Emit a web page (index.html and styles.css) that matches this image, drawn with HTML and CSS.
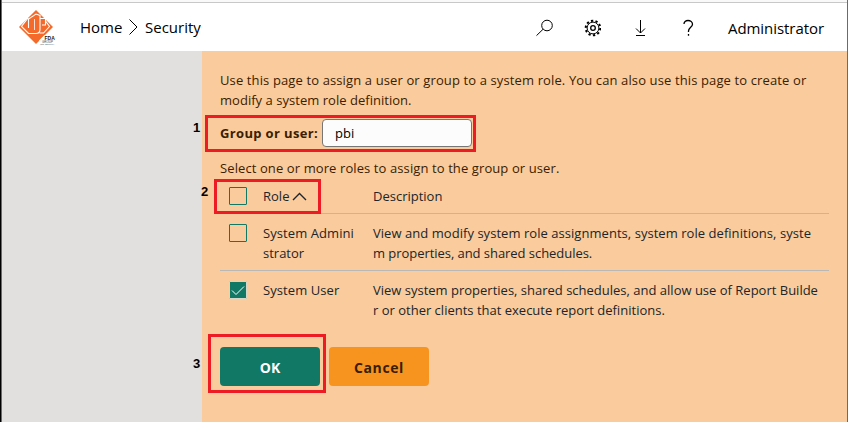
FILE: index.html
```html
<!DOCTYPE html>
<html lang="en">
<head>
<meta charset="utf-8">
<title>Security</title>
<link rel="stylesheet" href="styles.css">
</head>
<body>
<div class="window">
  <header class="topbar">
    <svg class="logo" width="36" height="36" viewBox="0 0 36 36">
      <path d="M17 0 34 17 17 34 0 17Z" fill="#f36a2b"/>
      <path d="M9 8 2.500 16.500 9.500 23.500H17q4 0 4-4V5.500L17 4 9.500 9v9" class="logo-line"/>
      <path d="M15.500 9v11" class="logo-line faint"/>
      <path d="M21 8.500h5.500V15H23M26.500 11l4 5.500-6 6.500h-4" class="logo-line"/>
      <path d="M25.500 25h10.500v10H20v-4.500Z" fill="#fff"/>
      <text x="25.500" y="29.500" class="logo-a">FDA</text>
      <text x="23" y="32.500" class="logo-b">GROUP</text>
      <text x="21" y="35" class="logo-c">INT. EQUITY</text>
    </svg>
    <nav class="crumbs"><span class="home">Home</span>
      <svg width="11" height="18" viewBox="0 0 11 18"><path d="M1.5 1.5 9 9 1.5 16.5" class="ink"/></svg>
      <span class="security">Security</span></nav>
    <div class="tools">
      <svg width="18" height="18" viewBox="0 0 18 18"><circle cx="12" cy="6.500" r="5.300" class="ink"/><path d="M8 10.300 1.500 16.600" class="ink"/></svg>
      <svg width="18" height="18" viewBox="0 0 18 18"><circle cx="10" cy="9" r="7.300" class="ink teeth"/><circle cx="10" cy="9" r="5.900" class="ink"/><circle cx="10" cy="9" r="2.300" class="ink thick"/></svg>
      <svg width="18" height="18" viewBox="0 0 18 18"><path d="M9.500 1v13M5 9.500l4.500 4.500L14 9.500M5 16.500h9" class="ink"/></svg>
      <svg width="18" height="18" viewBox="0 0 18 18"><path d="M5 5C5 2.700 6.600 1.500 9 1.500S13.500 3 13.500 5.200C13.500 8 9.500 8.500 9.500 12v1M9.500 15v1.700" class="ink thick"/></svg>
    </div>
    <span class="admin">Administrator</span>
  </header>
  <div class="body">
    <aside class="side"></aside>
    <main class="main">
      <p class="intro"><span class="line i1">Use this page to assign a user or group to a system role. You can also use this page to create or</span><span class="line i2">modify a system role definition.</span></p>
      <div class="field"><label class="label" for="user">Group or user:</label><input id="user" class="input" type="text" value="pbi"></div>
      <p class="select"><span class="line i3">Select one or more roles to assign to the group or user.</span></p>
      <div class="roles">
        <div class="row head"><i class="check"></i><div class="name"><span class="role">Role</span><svg width="15" height="9" viewBox="0 0 15 9"><path d="M1 8 7.500 1.500 14 8" class="chev"/></svg></div><div><span class="line">Description</span></div></div>
        <div class="row"><i class="check"></i><div class="name"><span class="line n1">System Admini</span><span class="line">strator</span></div><div><span class="line d1">View and modify system role assignments, system role definitions, syste</span><span class="line d2">m properties, and shared schedules.</span></div></div>
        <div class="row last"><i class="check on"><svg width="16" height="16" viewBox="0 0 16 16"><path d="M2 8.500 6 12.500 14 4.500" class="tick"/></svg></i><div class="name"><span class="line n1">System User</span></div><div><span class="line">View system properties, shared schedules, and allow use of Report Builde</span><span class="line">r or other clients that execute report definitions.</span></div></div>
      </div>
      <div class="actions"><button class="btn ok">OK</button><button class="btn cancel">Cancel</button></div>
    </main>
  </div>
  <div class="mark m1"></div><div class="mark m2"></div><div class="mark m3"></div>
  <b class="num k1">1</b><b class="num k2">2</b><b class="num k3">3</b>
</div>
</body>
</html>
```
FILE: styles.css
```css
* { box-sizing: border-box; }
body { margin: 0; font: 13px/20px "Open Sans", "Noto Sans", sans-serif; color: #3b1d00; }
p { margin: 0; }
.window { position: relative; display: flex; flex-direction: column; width: 848px; height: 422px; overflow: hidden; border-left: 1px solid #000; border-right: 1px solid #2b7cb8; background: #f9f9f9; padding-top: 2px; box-shadow: inset 1px 0 #2b7cb8; }
.topbar { display: flex; align-items: center; height: 49px; flex: none; margin-left: 1px; border-top: 1px solid #c8c8c8; background: #fff; color: #000; padding-left: 17px; font-size: 15px; }
.logo { margin-top: 1px; }
.logo-line { fill: none; stroke: #fff; stroke-width: 1.100; }
.faint { stroke-width: .8; }
.logo-a { font: bold 5px "Liberation Sans", sans-serif; fill: #222; }
.logo-b { font: 3px "Liberation Sans", sans-serif; fill: #444; }
.logo-c { font: 2.500px "Liberation Sans", sans-serif; fill: #555; }
.crumbs { display: flex; align-items: center; width: 200px; margin-left: 24px; padding-left: 1px; }
.crumbs svg { margin: 0 6px 0 5px; }
.home { width: 43px; white-space: nowrap; }
.tools { display: flex; gap: 30px; margin-left: 256px; margin-top: 2px; }
.admin { margin-left: 31px; margin-top: 2px; white-space: nowrap; letter-spacing: -.06px; }
.ink { fill: none; stroke: #000; stroke-width: 1; }
.thick { stroke-width: 1.300; }
.teeth { stroke-width: 2; stroke-dasharray: 2.300 2.287; }
.body { display: flex; flex: 1; margin-left: 1px; }
.side { width: 200px; background: #e1e0df; }
.main { flex: 1; background: #facb9c; padding: 19px 18px 0; }
.line { display: block; width: max-content; white-space: nowrap; }
.i1 { letter-spacing: .122px; }
.i2 { letter-spacing: .03px; }
.i3 { letter-spacing: .1px; }
.n1 { letter-spacing: .08px; }
.d1 { letter-spacing: .045px; }
.d2 { letter-spacing: -.05px; }
.field { display: flex; align-items: center; height: 28px; margin-top: 9px; }
.label { width: 102px; font-weight: bold; white-space: nowrap; letter-spacing: .35px; }
.input { width: 150px; height: 28px; padding: 0 12px; border: 1px solid #767676; border-radius: 4px; background: #fcfcfc; color: #000; font: inherit; }
.select { margin-top: 11px; }
.roles { width: 609px; color: #212529; }
.row { display: grid; grid-template-columns: 43px 110px 1fr; padding: 9px 0 7px; border-bottom: 1px solid #b8b8b8; height: 57px; }
.head { height: 36px; padding-top: 8px; }
.last { border: 0; }
.name { white-space: nowrap; }
.head .name svg { margin-left: 3px; }
.check { width: 18px; height: 18px; margin: 1px 0 0 9px; border: 1px solid #117865; border-radius: 1px; }
.on { background: #117865; border-color: #d5d8c8; }
.on svg { display: block; }
.tick { fill: none; stroke: #fff; }
.chev { fill: none; stroke: #212529; stroke-width: 1.400; }
.actions { display: flex; gap: 9px; margin-top: 19px; }
.btn { width: 100px; height: 39px; border: 0; border-radius: 4px; font: bold 14px "Open Sans", "Noto Sans", sans-serif; padding: 2px 0 0; }
.ok { background: #117865; color: #fff; }
.cancel { background: #f79420; color: #3b1d00; letter-spacing: .6px; }
.mark { position: absolute; border: 3px solid #ed1c24; }
.m1 { left: 204px; top: 115px; width: 271px; height: 37px; }
.m2 { left: 213px; top: 179px; width: 107px; height: 35px; }
.m3 { left: 207px; top: 334px; width: 118px; height: 59px; }
.num { position: absolute; color: #000; font: bold 13px/14px "Liberation Sans", sans-serif; }
.k1 { left: 192px; top: 121px; }
.k2 { left: 200px; top: 185px; }
.k3 { left: 192px; top: 357px; }
```
